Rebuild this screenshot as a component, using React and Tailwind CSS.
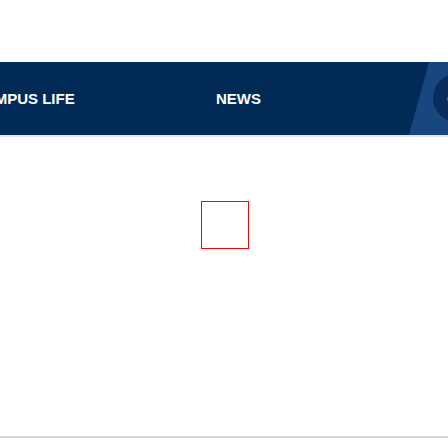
import React from "react";

export default function App() {
  return (
    <div className="w-[448px] h-[448px] bg-white overflow-hidden" style={{ fontFamily: '"Liberation Sans", Arial, sans-serif' }}>
      <div className="h-[62px]" />
      <div className="relative h-[73px] bg-[#012a56] overflow-hidden flex items-center">
        <nav className="flex items-center shrink-0 -ml-[27px] text-[15px] font-bold text-white leading-none">
          <span className="w-[243px] shrink-0">CAMPUS LIFE</span>
          <span>NEWS</span>
        </nav>
        <svg className="absolute right-0 top-0" width="48" height="73" viewBox="0 0 48 73">
          <polygon points="29,0 48,0 48,73 9,73" fill="#17477e" />
          <circle cx="57" cy="36" r="24" fill="#0a2c5c" />
          <rect x="47" y="35" width="1" height="4" fill="#2d5bd0" />
        </svg>
      </div>
      <div className="h-[2px] bg-[#e1e5eb]" />
      <div className="h-[64px]" />
      <div className="ml-[201px] w-12 h-12 border border-[#ff0000]" />
      <div className="h-[187px]" />
      <div className="h-[2px] bg-[#d4d4d4]" />
    </div>
  );
}
